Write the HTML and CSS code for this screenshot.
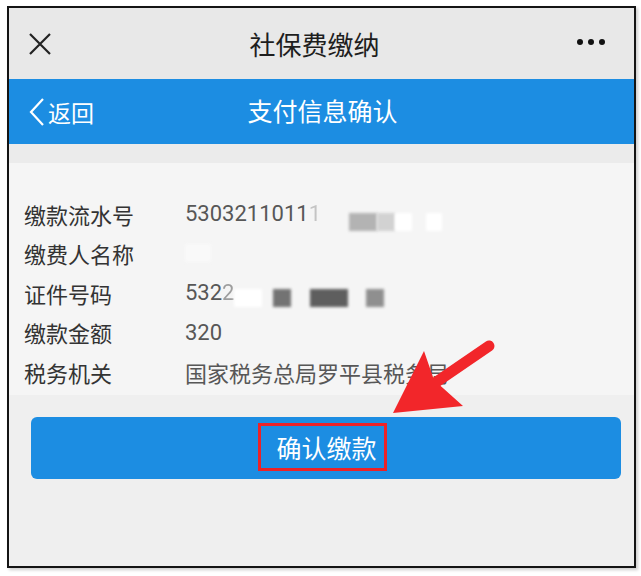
FILE: index.html
```html
<!DOCTYPE html>
<html>
<head>
    <meta charset="UTF-8">
    <title>社保费缴纳</title>
    <link rel="stylesheet" href="styles.css">
</head>
<body>
    <div class="frame">
        <div class="top-bar">
            <svg class="close-icon" width="24" height="24" viewBox="0 0 24 24">
                <path d="M2 2 L22 22 M22 2 L2 22" stroke="#222" stroke-width="2.2" fill="none"/>
            </svg>
            <div class="top-title">社保费缴纳</div>
            <div class="more-dots"><span></span><span></span><span></span></div>
        </div>

        <div class="blue-bar">
            <div class="back">
                <svg class="back-icon" width="16" height="28" viewBox="0 0 16 28">
                    <path d="M14 1 L2 14 L14 27" stroke="#fff" stroke-width="2.2" fill="none"/>
                </svg>
                <span>返回</span>
            </div>
            <div class="blue-title">支付信息确认</div>
        </div>

        <div class="gap-strip"></div>

        <ul class="info-list">
            <li>
                <span class="info-label">缴款流水号</span>
                <span class="info-value">5303211011<span class="fade">1</span><span class="mask mask-row1 mask-light1"></span><span class="mask mask-row1 mask-light2"></span><span class="mask mask-row1 mask-white1"></span><span class="mask mask-row1 mask-white2"></span></span>
            </li>
            <li>
                <span class="info-label">缴费人名称</span>
                <span class="info-value"><span class="mask mask-faint"></span></span>
            </li>
            <li>
                <span class="info-label">证件号码</span>
                <span class="info-value">532<span class="fade-soft">2</span><span class="mask mask-row3 mask-fade"></span><span class="mask mask-row3 mask-dark1"></span><span class="mask mask-row3 mask-dark2"></span><span class="mask mask-row3 mask-dark3"></span></span>
            </li>
            <li>
                <span class="info-label">缴款金额</span>
                <span class="info-value">320</span>
            </li>
            <li>
                <span class="info-label">税务机关</span>
                <span class="info-value">国家税务总局罗平县税务局</span>
            </li>
        </ul>

        <div class="bottom-area">
            <button class="confirm-button"><span class="highlight-box">确认缴款</span></button>
        </div>
    </div>

    <svg class="arrow" width="641" height="576" viewBox="0 0 641 576">
        <line x1="489" y1="346" x2="432" y2="385" stroke="#f2262a" stroke-width="11" stroke-linecap="round"/>
        <polygon points="393,413 424,351 434,380 463,406" fill="#f2262a"/>
    </svg>
</body>
</html>
```

FILE: styles.css
```css
body {
    margin: 0;
    background-color: #fff;
    font-family: "Noto Sans CJK SC", sans-serif;
    position: relative;
    width: 641px;
    height: 576px;
    overflow: hidden;
}

.frame {
    margin: 6px 0 0 7px;
    width: 629px;
    height: 562px;
    border: 2px solid #141414;
    box-sizing: border-box;
    background-color: #efefef;
    box-shadow: 2px 2px 3px rgba(0, 0, 0, 0.2);
    display: flex;
    flex-direction: column;
}

.top-bar {
    height: 71px;
    background-color: #e8e8e8;
    display: flex;
    align-items: center;
    justify-content: space-between;
    padding: 0 29px 0 19px;
    position: relative;
}
.close-icon {
    display: block;
    margin-top: 1px;
}
.top-title {
    position: absolute;
    left: 0;
    right: 0;
    text-align: center;
    font-size: 26px;
    color: #1e1e1e;
    padding-right: 14px;
    pointer-events: none;
}
.more-dots {
    display: flex;
    gap: 5px;
    margin-top: -3px;
}
.more-dots span {
    width: 6px;
    height: 6px;
    border-radius: 50%;
    background-color: #111;
}

.blue-bar {
    height: 65px;
    background-color: #1c8de2;
    color: #fff;
    display: flex;
    align-items: center;
    position: relative;
}
.back {
    display: flex;
    align-items: center;
    padding-left: 20px;
    font-size: 23px;
}
.back-icon {
    display: block;
    margin-right: 3px;
}
.blue-title {
    position: absolute;
    left: 0;
    right: 0;
    text-align: center;
    font-size: 25px;
    pointer-events: none;
    padding-left: 2px;
    margin-top: -4px;
}

.gap-strip {
    height: 19px;
    background-color: #ebebeb;
}

.info-list {
    list-style: none;
    margin: 0;
    padding: 31px 0 3px 15px;
    background-color: #f5f5f5;
}
.info-list li {
    height: 39.5px;
    display: flex;
    align-items: center;
}
.info-label {
    width: 161px;
    font-size: 22px;
    color: #333;
}
.info-value {
    display: flex;
    align-items: center;
    font-family: Roboto, "Noto Sans CJK SC", sans-serif;
    font-size: 22px;
    color: #575757;
    height: 30px;
}

.fade {
    opacity: 0.3;
}
.fade-soft {
    opacity: 0.55;
}
.mask {
    display: inline-block;
    height: 18px;
    filter: blur(1.5px);
    position: relative;
}
.mask-row1 { top: 8px; }
.mask-row3 { top: 5px; }
.mask-light1 { width: 28px; margin-left: 28px; background-color: #b3b3b3; }
.mask-light2 { width: 18px; background-color: #d2d2d2; }
.mask-white1 { width: 17px; background-color: #fff; }
.mask-white2 { width: 16px; margin-left: 14px; background-color: #fff; }
.mask-faint { width: 26px; background-color: #f9f9f9; }
.mask-fade { width: 28px; background-color: #fff; }
.mask-dark1 { width: 18px; margin-left: 11px; background-color: #737373; }
.mask-dark2 { width: 38px; margin-left: 19px; background-color: #5e5e5e; }
.mask-dark3 { width: 18px; margin-left: 18px; background-color: #8f8f8f; }

.bottom-area {
    flex: 1;
    padding: 22px 13px 0 22px;
}
.confirm-button {
    width: 100%;
    height: 62px;
    background-color: #1c8de2;
    border: none;
    border-radius: 6px;
    color: #fff;
    font-family: inherit;
    font-size: 25px;
    display: flex;
    align-items: center;
    justify-content: center;
    padding: 0;
}
.highlight-box {
    box-sizing: border-box;
    border: 3px solid #ec2227;
    width: 129px;
    height: 48px;
    display: flex;
    align-items: center;
    justify-content: center;
    padding-left: 8px;
    margin-right: 7px;
    margin-top: -1px;
}

.arrow {
    position: absolute;
    left: 0;
    top: 0;
    pointer-events: none;
}
```
